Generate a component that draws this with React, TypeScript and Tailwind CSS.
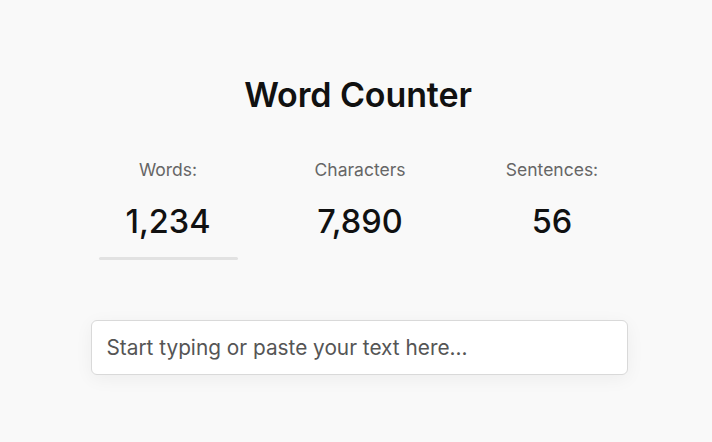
import React from "react";

export default function App() {
  const stats = [
    { label: "Words:", value: "1,234", active: true },
    { label: "Characters", value: "7,890", active: false },
    { label: "Sentences:", value: "56", active: false },
  ];
  return (
    <div
      className="w-[712px] h-[442px] bg-[#f9f9f9] flex flex-col items-center"
      style={{ fontFamily: "Inter, 'Liberation Sans', sans-serif" }}
    >
      <h1 className="mt-[75px] ml-[4px] text-[34px] leading-[40px] font-semibold text-[#111] tracking-[-0.1px]">
        Word Counter
      </h1>
      <div className="mt-[45px] ml-[8px] grid grid-cols-[192px_192px_192px]">
        {stats.map((s) => (
          <div key={s.label} className="flex flex-col items-center">
            <div className="text-[17.5px] leading-[20px] text-[#666]">{s.label}</div>
            <div className="mt-[22px] text-[32.5px] leading-[40px] font-medium text-[#111]">
              {s.value}
            </div>
            <div
              className={
                s.active
                  ? "mt-[15px] w-[139px] h-[3px] rounded-full bg-[#e2e2e2]"
                  : "mt-[15px] w-[139px] h-[3px]"
              }
            />
          </div>
        ))}
      </div>
      <div className="mt-[60px] ml-[6px] w-[537px] h-[55px] bg-white border border-[#d9d9d9] rounded-[6px] shadow-[0_4px_18px_rgba(0,0,0,0.05)] flex items-center px-[15px]">
        <span className="text-[20.8px] text-[#555]">Start typing or paste your text here...</span>
      </div>
    </div>
  );
}
